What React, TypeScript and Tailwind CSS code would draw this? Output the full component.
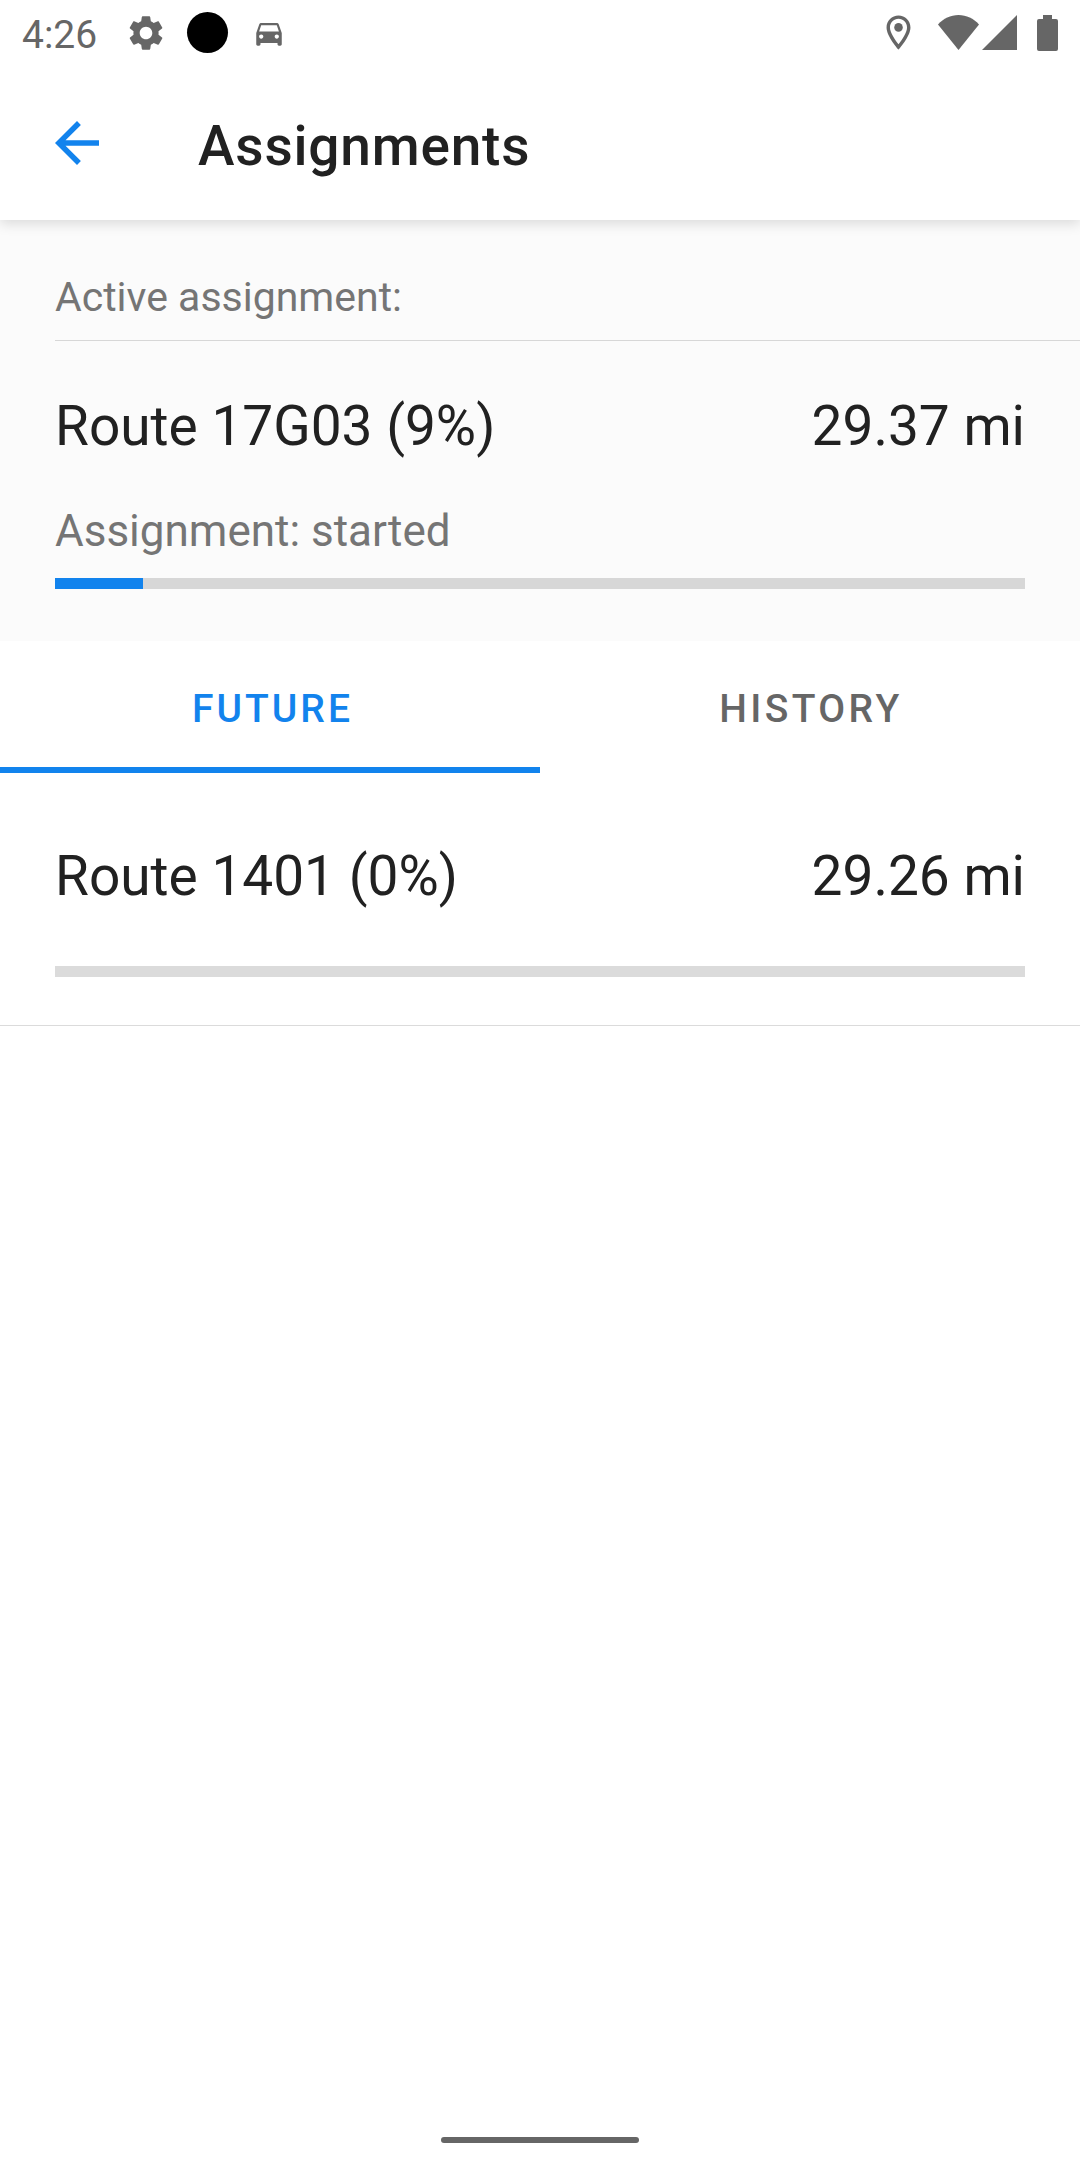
import React from "react";

function StatusBar() {
  return (
    <div className="flex h-[65px] items-center justify-between pl-[22px] pr-[22px] text-[#666666]">
      <div className="flex items-center">
        <span className="w-[103px] pt-[4px] text-[39px] leading-[44px]">4:26</span>
        <svg className="mt-[1px] h-[42px] w-[42px]" viewBox="0 0 24 24" fill="currentColor">
          <path d="M19.14 12.94c.04-.3.06-.61.06-.94 0-.32-.02-.64-.07-.94l2.03-1.58c.18-.14.23-.41.12-.61l-1.92-3.32c-.12-.22-.37-.29-.59-.22l-2.39.96c-.5-.38-1.03-.7-1.62-.94l-.36-2.54c-.04-.24-.24-.41-.48-.41h-3.84c-.24 0-.43.17-.47.41l-.36 2.54c-.59.24-1.13.57-1.62.94l-2.39-.96c-.22-.08-.47 0-.59.22L2.74 8.87c-.12.21-.08.47.12.61l2.03 1.58c-.05.3-.07.62-.07.94s.02.64.07.94l-2.03 1.58c-.18.14-.23.41-.12.61l1.92 3.32c.12.22.37.29.59.22l2.39-.96c.5.38 1.03.7 1.62.94l.36 2.54c.05.24.24.41.48.41h3.84c.24 0 .44-.17.47-.41l.36-2.54c.59-.24 1.13-.56 1.62-.94l2.39.96c.22.08.47 0 .59-.22l1.92-3.32c.12-.22.07-.47-.12-.61l-2.01-1.58zM12 15.6c-1.98 0-3.6-1.62-3.6-3.6s1.62-3.6 3.6-3.6 3.6 1.62 3.6 3.6-1.62 3.6-3.6 3.6z" />
        </svg>
        <span className="ml-[20px] h-[41px] w-[41px] rounded-full bg-black" />
        <svg className="ml-[24px] h-[34px] w-[34px]" viewBox="0 0 24 24" fill="currentColor">
          <path d="M18.92 6.01C18.72 5.42 18.16 5 17.5 5h-11c-.66 0-1.21.42-1.42 1.01L3 12v8c0 .55.45 1 1 1h1c.55 0 1-.45 1-1v-1h12v1c0 .55.45 1 1 1h1c.55 0 1-.45 1-1v-8l-2.08-5.99zM6.5 16c-.83 0-1.5-.67-1.5-1.5S5.67 13 6.5 13s1.5.67 1.5 1.5S7.33 16 6.5 16zm11 0c-.83 0-1.5-.67-1.5-1.5s.67-1.5 1.5-1.5 1.5.67 1.5 1.5-.67 1.5-1.5 1.5zM5 11l1.5-4.5h11L19 11H5z" />
        </svg>
      </div>
      <div className="flex items-center">
        <svg className="h-[41px] w-[41px]" viewBox="0 0 24 24" fill="currentColor">
          <path d="M12 2C8.13 2 5 5.13 5 9c0 5.25 7 13 7 13s7-7.75 7-13c0-3.87-3.13-7-7-7zM7 9c0-2.76 2.24-5 5-5s5 2.24 5 5c0 2.88-2.88 7.19-5 9.88C9.92 16.21 7 11.85 7 9z" />
          <circle cx="12" cy="9" r="2.5" />
        </svg>
        <svg className="ml-[19px] h-[35px] w-[41px]" viewBox="0 0 41 35" fill="currentColor">
          <path d="M20.5 35 0 9.5C5.5 3.5 12.5 0 20.5 0s15 3.5 20.5 9.5z" />
        </svg>
        <svg className="ml-[3px] h-[35px] w-[35px]" viewBox="0 0 35 35" fill="currentColor">
          <path d="M35 0v35H0z" />
        </svg>
        <svg className="ml-[20px] h-[36px] w-[21px]" viewBox="0 0 21 36" fill="currentColor">
          <path d="M6 0h9v4h4q2 0 2 2v28q0 2-2 2H2q-2 0-2-2V6q0-2 2-2h4z" />
        </svg>
      </div>
    </div>
  );
}

function Progress({ value }: { value: number }) {
  return (
    <div className="h-[11px] w-full bg-black/14">
      <div className="h-full bg-[#1283ed]" style={{ width: `${value}%` }} />
    </div>
  );
}

function RouteTitle({ name, distance }: { name: string; distance: string }) {
  return (
    <div className="flex justify-between text-[55px] leading-[64px] text-[#212121]">
      <span>{name}</span>
      <span>{distance}</span>
    </div>
  );
}

export default function App() {
  return (
    <div className="flex h-[2160px] w-[1080px] flex-col overflow-hidden bg-white font-['Roboto',sans-serif]">
      <header className="relative h-[220px] shrink-0 bg-white shadow-[0_4px_12px_rgba(0,0,0,0.13)]">
        <StatusBar />
        <div className="flex h-[155px] items-center pl-[55px]">
          <svg className="h-[44px] w-[44px]" viewBox="4 4 16 16" fill="#1283ed">
            <path d="M20 11H7.83l5.59-5.59L12 4l-8 8 8 8 1.41-1.41L7.83 13H20v-2z" />
          </svg>
          <h1 className="ml-[99px] pt-[6px] text-[55px] font-medium leading-[64px] tracking-[0.8px] text-[#212121]">Assignments</h1>
        </div>
      </header>
      <section className="h-[421px] shrink-0 bg-[#fbfbfb] pl-[55px]">
        <div className="h-[121px] border-b border-black/14 pt-[53px] text-[41px] leading-[48px] text-[#757575]">Active assignment:</div>
        <div className="pr-[55px] pt-[53px]">
          <RouteTitle name="Route 17G03 (9%)" distance="29.37 mi" />
          <div className="mb-[22px] mt-[48px] text-[44px] leading-[50px] text-[#757575]">Assignment: started</div>
          <Progress value={9.07} />
        </div>
      </section>
      <nav className="grid h-[132px] shrink-0 grid-cols-2 text-center text-[39px] font-medium leading-[46px] tracking-[3.4px]">
        <div className="border-b-[6px] border-[#1283ed] pl-[5px] pt-[45px] tracking-[3px] text-[#1283ed]">FUTURE</div>
        <div className="pl-[2px] pt-[45px] text-[#666666]">HISTORY</div>
      </nav>
      <main className="h-[253px] shrink-0 border-b border-black/14 px-[55px] pt-[71px]">
        <RouteTitle name="Route 1401 (0%)" distance="29.26 mi" />
        <div className="pt-[58px]">
          <Progress value={0} />
        </div>
      </main>
      <footer className="mt-auto flex justify-center pb-[17px]">
        <div className="h-[6px] w-[198px] rounded-full bg-[#666666]" />
      </footer>
    </div>
  );
}
